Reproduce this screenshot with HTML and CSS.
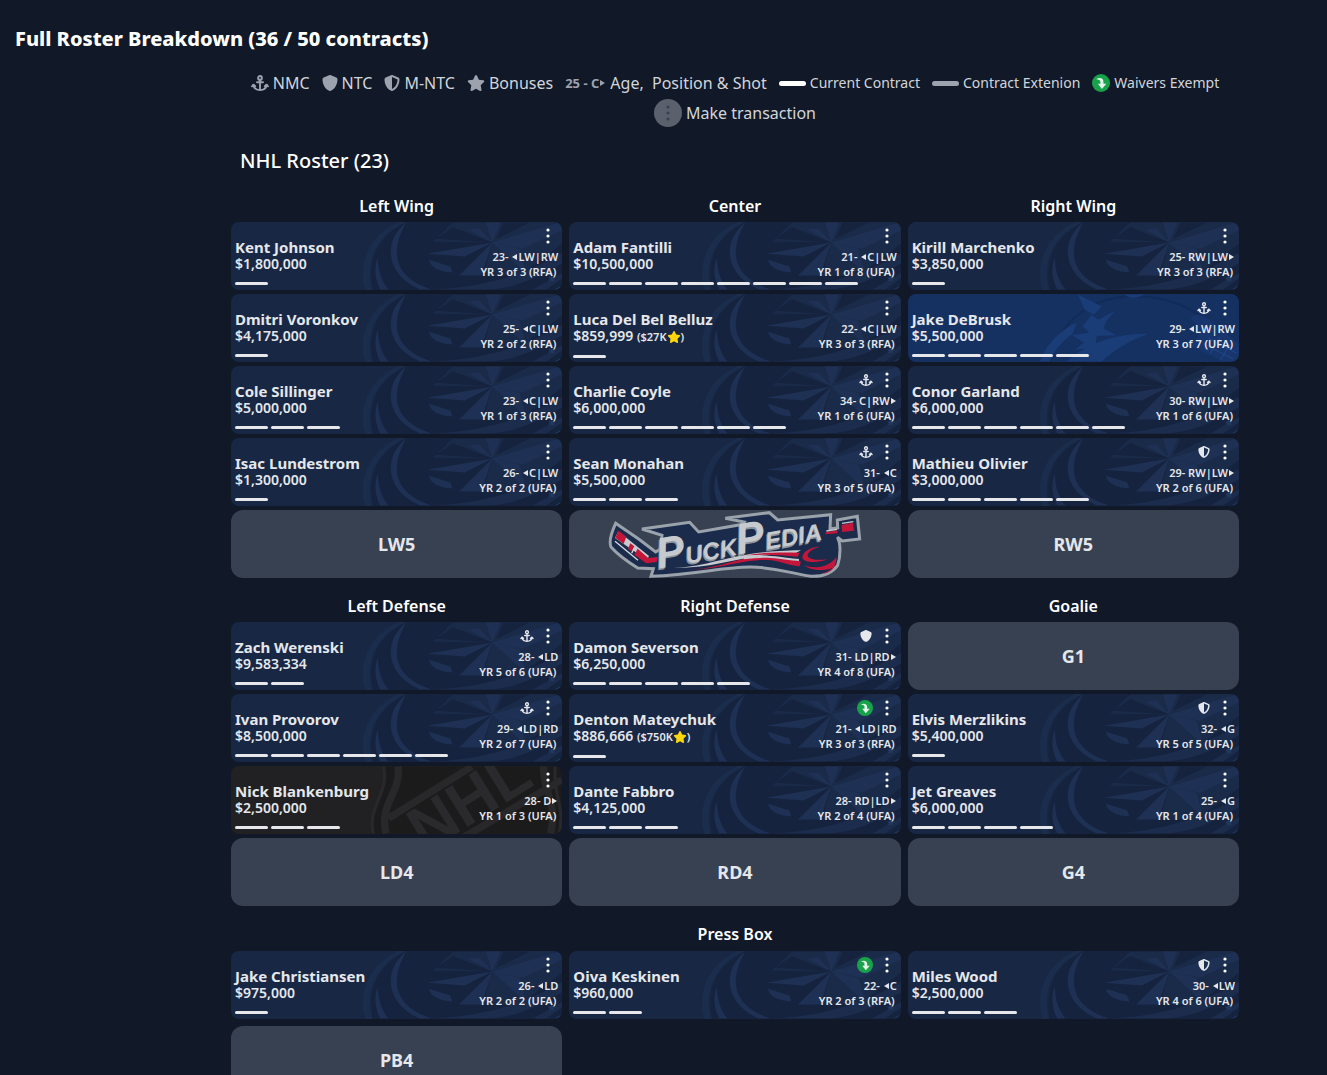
FILE: index.html
```
<!DOCTYPE html>
<html lang="en">
<head>
  <meta charset="UTF-8" />
  <meta name="viewport" content="width=device-width, initial-scale=1.0" />
  <title>Full Roster Breakdown</title>
  <link rel="stylesheet" href="styles.css">
</head>
<body>

  <svg class="sprite" aria-hidden="true">
    <symbol id="anchor" viewBox="0 0 18 16">
      <g fill="none" stroke="currentColor" stroke-width="1.9" stroke-linecap="round" stroke-linejoin="round">
        <circle cx="9" cy="2.900" r="1.900" />
        <path d="M9 5v10M6 7.300h6M2.500 10c.3 3.200 3 5 6.500 5s6.200-1.800 6.500-5" />
        <path d="M1 11.300l1.500-1.600 1.700 1.500M13.800 11.200l1.700-1.500 1.500 1.600" />
      </g>
    </symbol>
    <symbol id="shield" viewBox="0 0 512 512">
      <path fill="currentColor" d="M256 0c4.600 0 9.200 1 13.400 2.900L457.700 82.800c22 9.300 38.400 31 38.300 57.200c-.5 99.200-41.300 280.700-213.600 363.200c-16.700 8-36.100 8-52.800 0C57.300 420.700 16.500 239.200 16 140c-.1-26.200 16.300-47.900 38.300-57.200L242.700 2.900C246.800 1 251.400 0 256 0z" />
    </symbol>
    <symbol id="half-shield" viewBox="0 0 512 512">
      <path fill="currentColor" fill-rule="evenodd" d="M256 0c4.600 0 9.200 1 13.400 2.900L457.700 82.800c22 9.300 38.400 31 38.300 57.200c-.5 99.200-41.300 280.700-213.600 363.200c-16.700 8-36.100 8-52.800 0C57.300 420.700 16.500 239.200 16 140c-.1-26.200 16.300-47.900 38.300-57.200L242.700 2.900C246.800 1 251.400 0 256 0zM256 66.800V444.800C394 378 431.100 230.100 432 141.400L256 66.800z" />
    </symbol>
    <symbol id="star" viewBox="0 0 576 512">
      <path fill="currentColor" d="M316.900 18C311.600 7 300.400 0 288.100 0s-23.400 7-28.800 18L195 150.300 51.400 171.500c-12 1.800-22 10.200-25.700 21.700s-.7 24.200 7.900 32.700L137.800 329 113.200 474.700c-2 12 3 24.200 12.900 31.300s23 8 33.800 2.300l128.300-68.500 128.300 68.500c10.800 5.700 23.900 4.900 33.800-2.300s14.900-19.300 12.900-31.300L438.500 329 542.700 225.900c8.600-8.500 11.700-21.200 7.900-32.700s-13.700-19.900-25.700-21.700L381.200 150.300 316.900 18z" />
    </symbol>
    <symbol id="waivers" viewBox="0 0 18 18">
      <circle cx="9" cy="9" r="9" fill="#18a34a" />
      <path fill="#e5f4ea" d="M4.200 5.200C7 3.300 11.400 3.800 11.400 7.600v2.200h2.900L9.900 15 5.900 9.800h2.500V7.700c0-1.600-1.700-2.300-4.200-2.500z" />
    </symbol>
    <symbol id="dots" viewBox="0 0 4 16">
      <g fill="currentColor"><circle cx="2" cy="2" r="1.600" /><circle cx="2" cy="8" r="1.600" /><circle cx="2" cy="14" r="1.600" /></g>
    </symbol>
    <symbol id="left" viewBox="0 0 5 6"><path fill="currentColor" d="M5 0v6L0 3z" /></symbol>
    <symbol id="right" viewBox="0 0 5 6"><path fill="currentColor" d="M0 0v6l5-3z" /></symbol>
  </svg>

  <h1>Full Roster Breakdown (36 / 50 contracts)</h1>

  <main>
    <ul class="legend">
      <li><svg class="icon-wide"><use href="#anchor" /></svg>NMC</li>
      <li><svg class="icon"><use href="#shield" /></svg>NTC</li>
      <li><svg class="icon"><use href="#half-shield" /></svg>M-NTC</li>
      <li><svg class="icon-wide"><use href="#star" /></svg>Bonuses</li>
      <li><b>25 - C<svg class="tri"><use href="#right" /></svg></b>Age,&nbsp; Position &amp; Shot</li>
      <li class="small"><i class="line"></i>Current Contract</li>
      <li class="small"><i class="line extension"></i>Contract Extenion</li>
      <li class="small"><svg class="icon-round"><use href="#waivers" /></svg>Waivers Exempt</li>
      <li><span class="dots-badge"><svg class="dots"><use href="#dots" /></svg></span>Make transaction</li>
    </ul>

    <h2>NHL Roster (23)</h2>

    <!-- Forwards -->
    <section class="lines">
      <div class="column">
        <h3>Left Wing</h3>
        <article class="card">
          <div class="player"><h4>Kent Johnson</h4><p>$1,800,000</p><div class="years"><i></i></div></div>
          <div class="info">
            <div class="tools"><button aria-label="Make transaction"><svg class="dots"><use href="#dots" /></svg></button></div>
            <p>23- <svg class="tri"><use href="#left" /></svg>LW|RW</p><p class="term">YR 3 of 3 (RFA)</p>
          </div>
        </article>
        <article class="card">
          <div class="player"><h4>Dmitri Voronkov</h4><p>$4,175,000</p><div class="years"><i></i></div></div>
          <div class="info">
            <div class="tools"><button aria-label="Make transaction"><svg class="dots"><use href="#dots" /></svg></button></div>
            <p>25- <svg class="tri"><use href="#left" /></svg>C|LW</p><p class="term">YR 2 of 2 (RFA)</p>
          </div>
        </article>
        <article class="card">
          <div class="player"><h4>Cole Sillinger</h4><p>$5,000,000</p><div class="years"><i></i><i></i><i></i></div></div>
          <div class="info">
            <div class="tools"><button aria-label="Make transaction"><svg class="dots"><use href="#dots" /></svg></button></div>
            <p>23- <svg class="tri"><use href="#left" /></svg>C|LW</p><p class="term">YR 1 of 3 (RFA)</p>
          </div>
        </article>
        <article class="card">
          <div class="player"><h4>Isac Lundestrom</h4><p>$1,300,000</p><div class="years"><i></i></div></div>
          <div class="info">
            <div class="tools"><button aria-label="Make transaction"><svg class="dots"><use href="#dots" /></svg></button></div>
            <p>26- <svg class="tri"><use href="#left" /></svg>C|LW</p><p class="term">YR 2 of 2 (UFA)</p>
          </div>
        </article>
        <div class="slot">LW5</div>
      </div>

      <div class="column">
        <h3>Center</h3>
        <article class="card">
          <div class="player"><h4>Adam Fantilli</h4><p>$10,500,000</p><div class="years"><i></i><i></i><i></i><i></i><i></i><i></i><i></i><i></i></div></div>
          <div class="info">
            <div class="tools"><button aria-label="Make transaction"><svg class="dots"><use href="#dots" /></svg></button></div>
            <p>21- <svg class="tri"><use href="#left" /></svg>C|LW</p><p class="term">YR 1 of 8 (UFA)</p>
          </div>
        </article>
        <article class="card">
          <div class="player"><h4>Luca Del Bel Belluz</h4><p>$859,999 <small>($27K<svg class="bonus"><use href="#star" /></svg>)</small></p><div class="years"><i></i></div></div>
          <div class="info">
            <div class="tools"><button aria-label="Make transaction"><svg class="dots"><use href="#dots" /></svg></button></div>
            <p>22- <svg class="tri"><use href="#left" /></svg>C|LW</p><p class="term">YR 3 of 3 (RFA)</p>
          </div>
        </article>
        <article class="card">
          <div class="player"><h4>Charlie Coyle</h4><p>$6,000,000</p><div class="years"><i></i><i></i><i></i><i></i><i></i><i></i></div></div>
          <div class="info">
            <div class="tools"><svg class="clause"><use href="#anchor" /></svg><button aria-label="Make transaction"><svg class="dots"><use href="#dots" /></svg></button></div>
            <p>34- C|RW<svg class="tri"><use href="#right" /></svg></p><p class="term">YR 1 of 6 (UFA)</p>
          </div>
        </article>
        <article class="card">
          <div class="player"><h4>Sean Monahan</h4><p>$5,500,000</p><div class="years"><i></i><i></i><i></i></div></div>
          <div class="info">
            <div class="tools"><svg class="clause"><use href="#anchor" /></svg><button aria-label="Make transaction"><svg class="dots"><use href="#dots" /></svg></button></div>
            <p>31- <svg class="tri"><use href="#left" /></svg>C</p><p class="term">YR 3 of 5 (UFA)</p>
          </div>
        </article>
        <div class="slot">
          <svg class="logo" viewBox="50 15 765 201" role="img" aria-label="PuckPedia">
            <path fill="#1b2b4b" stroke="#9aa2ab" stroke-width="9" stroke-linejoin="miter" d="M76 52L146 100 196 138 209 130 215 88 155 69 298 49 325 78 458 55 462 48 405 37 537 20 562 42 721 26 719 68 742 66 741 42 801 31 808 99 756 105 741 94C752 112 751 150 742 178C722 206 690 212 662 211C590 200 560 184 480 183C400 183 320 205 182 211L189 188 142 186C110 166 84 148 62 123C55 106 62 82 76 52Z" />
            <path fill="#c6cacf" d="M84 76l92 74-6 12-96-66z" />
            <path fill="#c4163b" d="M84 74l24 18-8 22-25-19zM120 112l12 9-7 16-12-9zM142 128l32 28 29-3-4 15-31 4-36-26z" />
            <path fill="none" stroke="#d5d8dc" stroke-width="4" d="M74 106l69 57M132 125l-8 17" />
            <path fill="#c4163b" d="M706 79l35-6v9l-35 3zM754 57l34-7 3 24-36 4z" />
            <path stroke="#c6cacf" stroke-width="4" d="M708 75l32-5M755 52l34-5" />
            <path fill="#c6cacf" d="M250 186C380 180 420 135 632 133l-20 10C450 145 400 185 250 186z" />
            <path fill="#c4163b" d="M300 192C420 180 440 150 540 151C580 152 600 164 632 166l-4 15C590 178 570 163 530 162C460 160 400 186 300 192zM465 148C530 138 570 140 628 140l-6 12C570 146 520 144 465 148z" />
            <path fill="none" stroke="#c6cacf" stroke-width="6" d="M460 157C540 145 570 158 626 162" />
            <text class="logo-shade" transform="rotate(-10 205 190)" x="201" y="193"><tspan class="logo-cap">P</tspan>UCK<tspan class="logo-cap">P</tspan>EDIA</text>
            <text class="logo-text" transform="rotate(-10 205 190)" x="205" y="188"><tspan class="logo-cap">P</tspan>UCK<tspan class="logo-cap">P</tspan>EDIA</text>
            <ellipse cx="686" cy="158" rx="56" ry="44" fill="#1b2b4b" transform="rotate(-12 686 158)" />
            <path fill="#c4163b" d="M690 122C656 122 636 140 636 155C640 170 680 172 712 160C660 166 646 154 654 142C660 132 674 126 690 122zM641 178C672 190 718 184 738 152C738 184 724 200 696 203C712 198 722 192 726 186C700 196 660 194 641 178z" />
          </svg>
        </div>
      </div>

      <div class="column">
        <h3>Right Wing</h3>
        <article class="card">
          <div class="player"><h4>Kirill Marchenko</h4><p>$3,850,000</p><div class="years"><i></i></div></div>
          <div class="info">
            <div class="tools"><button aria-label="Make transaction"><svg class="dots"><use href="#dots" /></svg></button></div>
            <p>25- RW|LW<svg class="tri"><use href="#right" /></svg></p><p class="term">YR 3 of 3 (RFA)</p>
          </div>
        </article>
        <article class="card canucks">
          <div class="player"><h4>Jake DeBrusk</h4><p>$5,500,000</p><div class="years"><i></i><i></i><i></i><i></i><i></i></div></div>
          <div class="info">
            <div class="tools"><svg class="clause"><use href="#anchor" /></svg><button aria-label="Make transaction"><svg class="dots"><use href="#dots" /></svg></button></div>
            <p>29- <svg class="tri"><use href="#left" /></svg>LW|RW</p><p class="term">YR 3 of 7 (UFA)</p>
          </div>
        </article>
        <article class="card">
          <div class="player"><h4>Conor Garland</h4><p>$6,000,000</p><div class="years"><i></i><i></i><i></i><i></i><i></i><i></i></div></div>
          <div class="info">
            <div class="tools"><svg class="clause"><use href="#anchor" /></svg><button aria-label="Make transaction"><svg class="dots"><use href="#dots" /></svg></button></div>
            <p>30- RW|LW<svg class="tri"><use href="#right" /></svg></p><p class="term">YR 1 of 6 (UFA)</p>
          </div>
        </article>
        <article class="card">
          <div class="player"><h4>Mathieu Olivier</h4><p>$3,000,000</p><div class="years"><i></i><i></i><i></i><i></i><i></i></div></div>
          <div class="info">
            <div class="tools"><svg class="clause"><use href="#half-shield" /></svg><button aria-label="Make transaction"><svg class="dots"><use href="#dots" /></svg></button></div>
            <p>29- RW|LW<svg class="tri"><use href="#right" /></svg></p><p class="term">YR 2 of 6 (UFA)</p>
          </div>
        </article>
        <div class="slot">RW5</div>
      </div>
    </section>

    <!-- Defense and goalies -->
    <section class="lines">
      <div class="column">
        <h3>Left Defense</h3>
        <article class="card">
          <div class="player"><h4>Zach Werenski</h4><p>$9,583,334</p><div class="years"><i></i><i></i></div></div>
          <div class="info">
            <div class="tools"><svg class="clause"><use href="#anchor" /></svg><button aria-label="Make transaction"><svg class="dots"><use href="#dots" /></svg></button></div>
            <p>28- <svg class="tri"><use href="#left" /></svg>LD</p><p class="term">YR 5 of 6 (UFA)</p>
          </div>
        </article>
        <article class="card">
          <div class="player"><h4>Ivan Provorov</h4><p>$8,500,000</p><div class="years"><i></i><i></i><i></i><i></i><i></i><i></i></div></div>
          <div class="info">
            <div class="tools"><svg class="clause"><use href="#anchor" /></svg><button aria-label="Make transaction"><svg class="dots"><use href="#dots" /></svg></button></div>
            <p>29- <svg class="tri"><use href="#left" /></svg>LD|RD</p><p class="term">YR 2 of 7 (UFA)</p>
          </div>
        </article>
        <article class="card nhl">
          <div class="player"><h4>Nick Blankenburg</h4><p>$2,500,000</p><div class="years"><i></i><i></i><i></i></div></div>
          <div class="info">
            <div class="tools"><button aria-label="Make transaction"><svg class="dots"><use href="#dots" /></svg></button></div>
            <p>28- D<svg class="tri"><use href="#right" /></svg></p><p class="term">YR 1 of 3 (UFA)</p>
          </div>
        </article>
        <div class="slot">LD4</div>
      </div>

      <div class="column">
        <h3>Right Defense</h3>
        <article class="card">
          <div class="player"><h4>Damon Severson</h4><p>$6,250,000</p><div class="years"><i></i><i></i><i></i><i></i><i></i></div></div>
          <div class="info">
            <div class="tools"><svg class="clause"><use href="#shield" /></svg><button aria-label="Make transaction"><svg class="dots"><use href="#dots" /></svg></button></div>
            <p>31- LD|RD<svg class="tri"><use href="#right" /></svg></p><p class="term">YR 4 of 8 (UFA)</p>
          </div>
        </article>
        <article class="card">
          <div class="player"><h4>Denton Mateychuk</h4><p>$886,666 <small>($750K<svg class="bonus"><use href="#star" /></svg>)</small></p><div class="years"><i></i></div></div>
          <div class="info">
            <div class="tools"><svg class="exempt"><use href="#waivers" /></svg><button aria-label="Make transaction"><svg class="dots"><use href="#dots" /></svg></button></div>
            <p>21- <svg class="tri"><use href="#left" /></svg>LD|RD</p><p class="term">YR 3 of 3 (RFA)</p>
          </div>
        </article>
        <article class="card">
          <div class="player"><h4>Dante Fabbro</h4><p>$4,125,000</p><div class="years"><i></i><i></i><i></i></div></div>
          <div class="info">
            <div class="tools"><button aria-label="Make transaction"><svg class="dots"><use href="#dots" /></svg></button></div>
            <p>28- RD|LD<svg class="tri"><use href="#right" /></svg></p><p class="term">YR 2 of 4 (UFA)</p>
          </div>
        </article>
        <div class="slot">RD4</div>
      </div>

      <div class="column">
        <h3>Goalie</h3>
        <div class="slot">G1</div>
        <article class="card">
          <div class="player"><h4>Elvis Merzlikins</h4><p>$5,400,000</p><div class="years"><i></i></div></div>
          <div class="info">
            <div class="tools"><svg class="clause"><use href="#half-shield" /></svg><button aria-label="Make transaction"><svg class="dots"><use href="#dots" /></svg></button></div>
            <p>32- <svg class="tri"><use href="#left" /></svg>G</p><p class="term">YR 5 of 5 (UFA)</p>
          </div>
        </article>
        <article class="card">
          <div class="player"><h4>Jet Greaves</h4><p>$6,000,000</p><div class="years"><i></i><i></i><i></i><i></i></div></div>
          <div class="info">
            <div class="tools"><button aria-label="Make transaction"><svg class="dots"><use href="#dots" /></svg></button></div>
            <p>25- <svg class="tri"><use href="#left" /></svg>G</p><p class="term">YR 1 of 4 (UFA)</p>
          </div>
        </article>
        <div class="slot">G4</div>
      </div>
    </section>

    <!-- Press box -->
    <h3>Press Box</h3>
    <section class="lines press">
      <article class="card">
        <div class="player"><h4>Jake Christiansen</h4><p>$975,000</p><div class="years"><i></i></div></div>
        <div class="info">
          <div class="tools"><button aria-label="Make transaction"><svg class="dots"><use href="#dots" /></svg></button></div>
          <p>26- <svg class="tri"><use href="#left" /></svg>LD</p><p class="term">YR 2 of 2 (UFA)</p>
        </div>
      </article>
      <article class="card">
        <div class="player"><h4>Oiva Keskinen</h4><p>$960,000</p><div class="years"><i></i><i></i></div></div>
        <div class="info">
          <div class="tools"><svg class="exempt"><use href="#waivers" /></svg><button aria-label="Make transaction"><svg class="dots"><use href="#dots" /></svg></button></div>
          <p>22- <svg class="tri"><use href="#left" /></svg>C</p><p class="term">YR 2 of 3 (RFA)</p>
        </div>
      </article>
      <article class="card">
        <div class="player"><h4>Miles Wood</h4><p>$2,500,000</p><div class="years"><i></i><i></i><i></i></div></div>
        <div class="info">
          <div class="tools"><svg class="clause"><use href="#half-shield" /></svg><button aria-label="Make transaction"><svg class="dots"><use href="#dots" /></svg></button></div>
          <p>30- <svg class="tri"><use href="#left" /></svg>LW</p><p class="term">YR 4 of 6 (UFA)</p>
        </div>
      </article>
      <div class="slot">PB4</div>
    </section>
  </main>

</body>
</html>
```
FILE: styles.css
```
* {
  box-sizing: border-box;
}

body {
  margin: 0;
  background: #111827;
  color: #fff;
  font-family: "Noto Sans", "Open Sans", sans-serif;
  font-size: 16px;
  line-height: 24px;
}

h1, h2, h3, h4, p, ul {
  margin: 0;
  padding: 0;
}

.sprite {
  display: none;
}

h1 {
  padding: 24px 15px 0;
  font-size: 20px;
  font-weight: 800;
  line-height: 30px;
}

main {
  padding: 14px 88px 0 231px;
}

.legend {
  display: flex;
  flex-wrap: wrap;
  justify-content: center;
  column-gap: 12px;
  list-style: none;
  color: #d1d5db;
}

.legend li {
  display: flex;
  align-items: center;
  gap: 4px;
  height: 30px;
}

.legend b {
  font-size: 13px;
  color: #9ca3af;
}

.legend .small {
  font-size: 14px;
}

.legend svg {
  color: #9ca3af;
}

.icon {
  width: 16px;
  height: 16px;
}

.icon-wide {
  width: 18px;
  height: 16px;
}

.icon-round {
  width: 18px;
  height: 18px;
}

.line {
  width: 27px;
  height: 5px;
  border-radius: 3px;
  background: #fff;
}

.line.extension {
  background: #9ca3af;
}

.dots {
  width: 4px;
  height: 16px;
}

.dots-badge {
  display: flex;
  align-items: center;
  justify-content: center;
  width: 28px;
  height: 28px;
  border-radius: 50%;
  background: #5b616c;
}

.legend .dots {
  color: #374151;
}

.tri {
  width: 5px;
  height: 6px;
  margin: 0 1px 2px;
  vertical-align: middle;
}

h2 {
  padding: 18px 9px;
  font-size: 20px;
  font-weight: 500;
  line-height: 30px;
}

h3 {
  font-size: 16px;
  font-weight: 600;
  text-align: center;
}

.lines {
  display: grid;
  grid-template-columns: repeat(3, minmax(0, 1fr));
  gap: 7px;
  margin-bottom: 16px;
}

.column {
  display: flex;
  flex-direction: column;
  gap: 4px;
}

.press {
  margin-top: 5px;
}

.card {
  display: flex;
  justify-content: space-between;
  min-height: 68px;
  padding: 4px;
  border-radius: 8px;
  color: #e5e7eb;
  background: #182844 url("data:image/svg+xml,%3Csvg xmlns='http://www.w3.org/2000/svg' viewBox='27 6 600 201'%3E%3Cpath fill='%231b2d4d' d='M150 0C60 30 10 120 38 210H58C30 120 80 30 172 0z'/%3E%3Cpath fill='%2316233f' d='M172 0C80 40 40 110 60 210H640V0z'/%3E%3Cpath fill='%231e3154' d='M160 6C90 60 95 160 200 207H236C120 170 110 90 160 6zM74 112C60 150 70 185 82 207H106C84 180 76 150 74 112z'/%3E%3Cpath fill='%231a2a49' d='M300 6H470L560 0H640V60L500 165H390L418 66 240 64z'/%3E%3Cpath fill='%2316233f' d='M418 66L300 20 250 55zM452 6L430 55 530 6z'/%3E%3Cpath fill='%231e3154' d='M418 66L398 6H442zM418 66L345 28 380 24zM418 66L222 100 335 108zM418 66L318 165H385zM418 66L520 160 500 85zM418 66L640 0V24L510 85zM228 118L292 138 298 156C260 154 232 142 228 118z'/%3E%3Cpath fill='%231b2c4c' d='M236 207C400 200 520 160 640 90V120C560 170 480 207 400 207zM540 207L640 150V165L580 207z'/%3E%3Cpath fill='%23213861' d='M596 164l4 7h8l-6 5 3 8-9-4-9 4 3-8-6-5h8zM605 207L640 185V207z'/%3E%3C/svg%3E") no-repeat right center / 200px 68px;
}

.card.canucks {
  background: #153162 url("data:image/svg+xml,%3Csvg xmlns='http://www.w3.org/2000/svg' viewBox='27 222 600 201'%3E%3Cpath fill='none' stroke='%23122c5a' stroke-width='7' d='M60 423C90 300 180 232 300 228S520 270 570 350'/%3E%3Cpath fill='%231a3d78' d='M144 222L215 258 192 282 164 268zM184 284l22 14 50-28-28 32-8 22 40 20-60 2-4 34-60 8 26-22-36-22 52-8-20-18z'/%3E%3Cpath fill='%231a3d78' d='M140 306C90 330 50 370 30 423H60C70 390 100 360 128 340z'/%3E%3Cpath fill='%231a3d78' d='M110 423C170 370 250 340 355 340C300 360 250 390 215 423zM284 222h60c-30 14-45 12-60 0z'/%3E%3Cpath fill='%2318366d' d='M480 290C500 276 530 286 550 310L627 370V423H580L470 370C520 360 510 330 480 290z'/%3E%3Cpath stroke='%231d4383' stroke-width='4' d='M520 370L610 415M535 352L620 398M570 350L540 400M600 370L572 418'/%3E%3C/svg%3E") no-repeat right center / 200px 68px;
}

.card.nhl {
  background: #212124 url("data:image/svg+xml,%3Csvg xmlns='http://www.w3.org/2000/svg' viewBox='0 0 600 201'%3E%3Cpath fill='%231b1b1c' d='M70 0C90 80 10 120 30 201H600V0z'/%3E%3Cg fill='none' stroke='%2328282b'%3E%3Cpath stroke-width='10' d='M64 0C84 80 14 120 34 201M580 0C570 80 610 120 592 201'/%3E%3Cpath stroke-width='22' d='M108 0C118 80 50 110 72 201M545 0C540 70 590 110 565 201M80 155L330 0M300 215L600 40'/%3E%3C/g%3E%3Cg fill='%232a2a2d' font-family='Liberation Sans' font-weight='bold' font-size='190'%3E%3Ctext transform='rotate(-32 190 260)' x='190' y='260'%3ENHL%3C/text%3E%3C/g%3E%3C/svg%3E") no-repeat right center / 200px 68px;
}

.player {
  padding-top: 13px;
}

.player h4 {
  font-size: 15px;
  font-weight: 700;
  line-height: 17px;
}

.player p {
  font-size: 14px;
  font-weight: 600;
  line-height: 16px;
}

.player small {
  font-size: 11px;
}

.bonus {
  width: 14px;
  height: 12px;
  color: #ffd60a;
  vertical-align: -2px;
}

/* one dash per remaining contract year */
.years {
  display: flex;
  gap: 3px;
  width: 0;
  margin-top: 10px;
}

.years i {
  flex: none;
  width: 33px;
  height: 3px;
  border-radius: 2px;
  background: #e5e7eb;
}

.info {
  font-size: 11px;
  font-weight: 600;
  line-height: 15px;
  text-align: right;
  white-space: nowrap;
}

.info .term {
  padding-right: 2px;
}

.tools {
  display: flex;
  align-items: center;
  justify-content: flex-end;
  gap: 8px;
  height: 20px;
  margin-bottom: 3px;
  padding-right: 4px;
}

.tools button {
  display: flex;
  justify-content: center;
  width: 12px;
  padding: 0;
  border: none;
  background: none;
  color: #fff;
  cursor: pointer;
}

.clause {
  width: 14px;
  height: 12px;
}

.exempt {
  width: 16px;
  height: 16px;
}

.slot {
  display: flex;
  align-items: center;
  justify-content: center;
  height: 68px;
  border-radius: 12px;
  background: #374151;
  color: #e5e7eb;
  font-size: 18px;
  font-weight: 700;
}

.logo {
  width: 255px;
  height: 67px;
}

.logo text {
  font-family: "Liberation Sans", sans-serif;
  font-size: 72px;
  font-style: italic;
  font-weight: 700;
}

.logo .logo-cap {
  font-size: 130px;
}

.logo-text {
  fill: #c6cacf;
}

.logo-shade {
  fill: #8b939d;
}
```
